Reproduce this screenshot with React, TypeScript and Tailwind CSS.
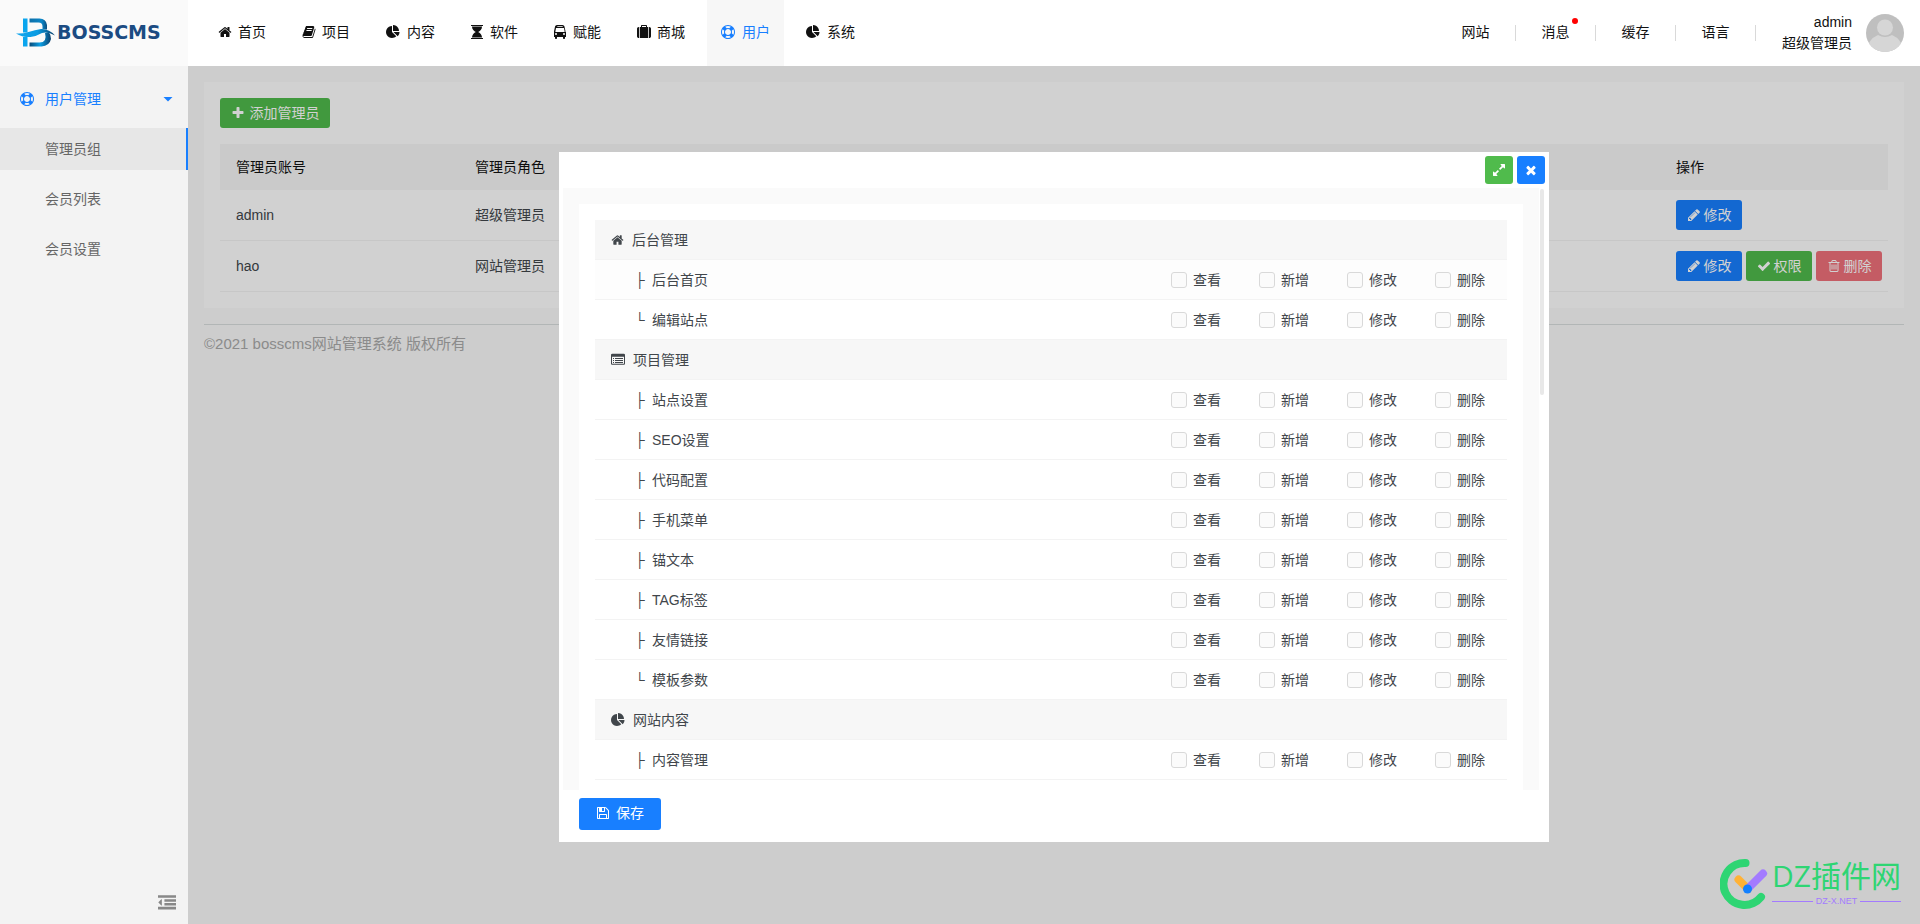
import type { ReactNode } from 'react'

const icons = {
  home: 'M1472 992v480q0 26-19 45t-45 19h-384v-384h-256v384h-384q-26 0-45-19t-19-45v-480q0-1 .5-3t.5-3l575-474 575 474q1 2 1 6zm223-69l-62 74q-8 9-21 11h-3q-13 0-21-7l-692-577-692 577q-12 8-24 7-13-2-21-11l-62-74q-8-10-7-23.5t11-21.5l719-599q32-26 76-26t76 26l244 204v-195q0-14 9-23t23-9h192q14 0 23 9t9 23v408l219 182q10 8 11 21.5t-7 23.5z',
  book: 'M1703 478q40 57 18 129l-275 906q-19 64-76.5 107.5t-122.5 43.5h-923q-77 0-148.5-53.5t-99.5-131.5q-24-67-2-127 0-4 3-27t4-37q1-8-3-21.5t-3-19.5q2-11 8-21t16.5-23.5 16.5-23.5q23-38 45-91.5t30-91.5q3-10 .5-30t-.5-28q3-11 17-28t17-23q21-36 42-92t25-90q1-9-2.5-32t.5-28q4-13 22-30.5t22-22.5q19-26 42.5-84.5t27.5-96.5q1-8-3-25.5t-2-26.5q2-8 9-18t18-23 17-21q8-12 16.5-30.5t15-35 16-36 19.5-32 26.5-23.5 36-11.5 47.5 5.5l-1 3q38-9 51-9h761q74 0 114 56t18 130l-274 906q-36 119-71.5 153.5t-128.5 34.5h-869q-27 0-38 15-11 16-1 43 24 70 144 70h923q29 0 56-15.5t35-41.5l300-987q7-22 5-57 38 15 59 43zm-1064 2q-4 13 2 22.5t20 9.5h608q13 0 25.5-9.5t16.5-22.5l21-64q4-13-2-22.5t-20-9.5h-608q-13 0-25.5 9.5t-16.5 22.5zm-83 256q-4 13 2 22.5t20 9.5h608q13 0 25.5-9.5t16.5-22.5l21-64q4-13-2-22.5t-20-9.5h-608q-13 0-25.5 9.5t-16.5 22.5z',
  pie: 'M768 890l546 546q-106 108-247.5 168t-298.5 60q-209 0-385.5-103t-279.5-279.5-103-385.5 103-385.5 279.5-279.5 385.5-103v762zm187 6h773q0 157-60 298.5t-168 247.5zm709-128h-768v-768q209 0 385.5 103t279.5 279.5 103 385.5z',
  hourglass: 'M128 0h1536v128h-1536zM256 192h1280q0 270-160 460t-330 244q170 54 330 244t160 460h-1280q0-270 160-460t330-244q-170-54-330-244t-160-460zM128 1664h1536v128h-1536z',
  bus: 'M512 1152a128 128 0 1 0-256 0a128 128 0 1 0 256 0zM1536 1152a128 128 0 1 0-256 0a128 128 0 1 0 256 0zM1489 817l-72-384q-5-23-22.500-37.500t-40.500-14.500h-918q-23 0-40.500 14.500t-22.500 37.500l-72 384q-5 30 14 53t49 23h1062q30 0 49-23t14-53zM1248 208q0-20-14-34t-34-14h-608q-20 0-34 14t-14 34 14 34 34 14h608q20 0 34-14t14-34zM1664 894v642h-128v128q0 53-37.500 90.500t-90.500 37.500-90.500-37.500-37.500-90.500v-128h-768v128q0 53-37.500 90.500t-90.500 37.500-90.500-37.500-37.500-90.500v-128h-128v-642q0-93 20-181l108-499q9-79 101-141t224.500-97 282.500-35 282.500 35 224.500 97 103 141l106 499q20 88 20 181z',
  suitcase: 'M640 256h512v-128h-512v128zm-352 0v1408h-64q-92 0-158-66t-66-158v-960q0-92 66-158t158-66h64zm1120 0v1408h-1024v-1408h128v-160q0-40 28-68t68-28h576q40 0 68 28t28 68v160h128zm384 224v960q0 92-66 158t-158 66h-64v-1408h64q92 0 158 66t66 158z',
  ring: 'M896 0q182 0 348 71t286 191 191 286 71 348-71 348-191 286-286 191-348 71-348-71-286-191-191-286-71-348 71-348 191-286 286-191 348-71zm0 128q-190 0-361 90l194 194q82-28 167-28t167 28l194-194q-171-90-361-90zm-678 1129l194-194q-28-82-28-167t28-167l-194-194q-90 171-90 361t90 361zm678 407q190 0 361-90l-194-194q-82 28-167 28t-167-28l-194 194q171 90 361 90zm0-384q159 0 271.5-112.5t112.5-271.5-112.5-271.5-271.5-112.5-271.5 112.5-112.5 271.5 112.5 271.5 271.5 112.5zm484-217l194 194q90-171 90-361t-90-361l-194 194q28 82 28 167t-28 167z',
  pencil: 'M491 1536l91-91-235-235-91 91v107h128v128h107zm523-928q0-22-22-22-10 0-17 7l-542 542q-7 7-7 17 0 22 22 22 10 0 17-7l542-542q7-7 7-17zm-54-192l416 416-832 832h-416v-416zm683 96q0 53-37 90l-166 166-416-416 166-165q36-38 90-38 53 0 91 38l235 234q37 39 37 91z',
  check: 'M1671 566q0 40-28 68l-724 724-136 136q-28 28-68 28t-68-28l-136-136-362-362q-28-28-28-68t28-68l136-136q28-28 68-28t68 28l294 295 656-657q28-28 68-28t68 28l136 136q28 28 28 68z',
  times: 'M1490 1322q0 40-28 68l-136 136q-28 28-68 28t-68-28l-294-294-294 294q-28 28-68 28t-68-28l-136-136q-28-28-28-68t28-68l294-294-294-294q-28-28-28-68t28-68l136-136q28-28 68-28t68 28l294 294 294-294q28-28 68-28t68 28l136 136q28 28 28 68t-28 68l-294 294 294 294q28 28 28 68z',
  plus: 'M1600 736v192q0 40-28 68t-68 28h-416v416q0 40-28 68t-68 28h-192q-40 0-68-28t-28-68v-416h-416q-40 0-68-28t-28-68v-192q0-40 28-68t68-28h416v-416q0-40 28-68t68-28h192q40 0 68 28t28 68v416h416q40 0 68 28t28 68z',
  trash: 'M704 736v576q0 14-9 23t-23 9h-64q-14 0-23-9t-9-23v-576q0-14 9-23t23-9h64q14 0 23 9t9 23zm256 0v576q0 14-9 23t-23 9h-64q-14 0-23-9t-9-23v-576q0-14 9-23t23-9h64q14 0 23 9t9 23zm256 0v576q0 14-9 23t-23 9h-64q-14 0-23-9t-9-23v-576q0-14 9-23t23-9h64q14 0 23 9t9 23zm128 724v-948h-896v948q0 22 7 40.5t14.5 27 10.500 8.500h832q3 0 10.500-8.500t14.500-27 7-40.500zm-672-1076h448l-48-117q-7-9-17-11h-317q-10 2-17 11zm928 32v64q0 14-9 23t-23 9h-96v948q0 83-47 143.500t-113 60.500h-832q-66 0-113-58.500t-47-141.500v-952h-96q-14 0-23-9t-9-23v-64q0-14 9-23t23-9h309l70-167q15-37 54-63t79-26h320q40 0 79 26t54 63l70 167h309q14 0 23 9t9 23z',
  save: 'M512 1536h768v-384h-768v384zm896 0h128v-896q0-14-10-38.5t-20-34.5l-281-281q-10-10-34-20t-39-10v416q0 40-28 68t-68 28h-576q-40 0-68-28t-28-68v-416h-128v1280h128v-416q0-40 28-68t68-28h832q40 0 68 28t28 68v416zm-384-928v-320q0-13-9.5-22.5t-22.5-9.5h-192q-13 0-22.5 9.5t-9.5 22.5v320q0 13 9.5 22.5t22.5 9.5h192q13 0 22.5-9.5t9.5-22.5zm640 32v928q0 40-28 68t-68 28h-1344q-40 0-68-28t-28-68v-1344q0-40 28-68t68-28h928q40 0 88 20t76 48l280 280q28 28 48 76t20 88z',
  list: 'M256 640h128v128h-128zM256 896h128v128h-128zM256 1152h128v128h-128zM512 640h1024v128h-1024zM512 896h1024v128h-1024zM512 1152h1024v128h-1024zm1152 192v-832q0-13-9.5-22.5t-22.5-9.5h-1472q-13 0-22.5 9.5t-9.5 22.5v832q0 13 9.5 22.5t22.5 9.5h1472q13 0 22.5-9.5t9.5-22.5zm128-1088v1088q0 66-47 113t-113 47h-1472q-66 0-113-47t-47-113v-1088q0-66 47-113t113-47h1472q66 0 113 47t47 113z',
  expand: 'M883 1056q0 13-10 23l-332 332 144 144q19 19 19 45t-19 45-45 19h-448q-26 0-45-19t-19-45v-448q0-26 19-45t45-19 45 19l144 144 332-332q10-10 23-10t23 10l114 114q10 10 10 23zm781-864v448q0 26-19 45t-45 19-45-19l-144-144-332 332q-10 10-23 10t-23-10l-114-114q-10-10-10-23t10-23l332-332-144-144q-19-19-19-45t19-45 45-19h448q26 0 45 19t19 45z',
  outdent: 'M384 544v576q0 32-32 32-14 0-23-9l-288-288q-9-9-9-23t9-23l288-288q9-9 23-9 32 0 32 32zM0 128h1792v256h-1792zM640 512h1152v256h-1152zM640 896h1152v256h-1152zM0 1280h1792v256h-1792z',
  caret: 'M320 640h1152l-576 576z',
}

type IconName = keyof typeof icons

function Icon({ name, className = 'size-[14px]' }: { name: IconName; className?: string }) {
  return (
    <svg viewBox="0 0 1792 1792" fill="currentColor" fillRule="evenodd" className={`shrink-0 ${className}`} aria-hidden="true">
      <path d={icons[name]} />
    </svg>
  )
}

const navItems: { label: string; icon: IconName; box: string; active?: boolean }[] = [
  { label: '首页', icon: 'home', box: 'w-[13px]' },
  { label: '项目', icon: 'book', box: 'w-[13px]' },
  { label: '内容', icon: 'pie', box: 'w-[14px]' },
  { label: '软件', icon: 'hourglass', box: 'w-[12px]' },
  { label: '赋能', icon: 'bus', box: 'w-[12px]' },
  { label: '商城', icon: 'suitcase', box: 'w-[13px]' },
  { label: '用户', icon: 'ring', box: 'w-[14px]', active: true },
  { label: '系统', icon: 'pie', box: 'w-[14px]' },
]

const tools = ['网站', '消息', '缓存', '语言']
const sideItems = ['管理员组', '会员列表', '会员设置']
const actions = ['查看', '新增', '修改', '删除']

const groups: { title: string; icon: IconName; rows: string[]; more?: boolean }[] = [
  { title: '后台管理', icon: 'home', rows: ['后台首页', '编辑站点'] },
  {
    title: '项目管理',
    icon: 'list',
    rows: ['站点设置', 'SEO设置', '代码配置', '手机菜单', '锚文本', 'TAG标签', '友情链接', '模板参数'],
  },
  { title: '网站内容', icon: 'pie', rows: ['内容管理'], more: true },
]

function Logo() {
  return (
    <a href="#" className="flex h-[66px] items-center gap-0.5 bg-[#fafafa] pb-0.5 pl-4">
      <svg viewBox="0 0 39 29" className="h-[29px] w-[39px] shrink-0" aria-hidden="true">
        <defs>
          <linearGradient id="top" x1="0" x2="1">
            <stop offset="0" stopColor="#0e6fa8" />
            <stop offset=".7" stopColor="#0a86c8" />
            <stop offset="1" stopColor="#0b4f80" />
          </linearGradient>
          <linearGradient id="bottom" x1="0" x2="1">
            <stop offset="0" stopColor="#0a4a78" />
            <stop offset=".5" stopColor="#0aa0e6" />
            <stop offset="1" stopColor="#0c3f6c" />
          </linearGradient>
          <linearGradient id="wave" x1="0" x2="1">
            <stop offset="0" stopColor="#12a6ee" />
            <stop offset=".55" stopColor="#0a9be2" />
            <stop offset="1" stopColor="#0b3f6b" />
          </linearGradient>
        </defs>
        <path d="M7 0.500h4.500v14h-4.500zM7 19l4.500-1v10.500h-4.500z" fill="#0aa5ee" />
        <path d="M13.500 0.500h10q6.500 0 7.500 6.500v4.500l-4.500-.5v-2.500q0-4-4-4h-9z" fill="url(#top)" />
        <path d="M13.500 28.500h12q8-.5 9.500-7.500 0-4-2-6.500l-4 .5q2.500 9.500-5.500 9.500h-10z" fill="url(#bottom)" />
        <path d="M0 15.500q6 .5 12.500-1.500t12.500-3q8-.5 14 6.500-7-4-13-2.500-5 3-11.500 4-8 .5-14.500-3.500z" fill="url(#wave)" />
      </svg>
      <span className="font-['DejaVu_Sans'] text-[19px] leading-none font-bold text-[#1b4b82]">BOSSCMS</span>
    </a>
  )
}

function Header() {
  return (
    <header className="flex h-[66px] bg-white text-[#111]">
      <div className="w-[188px] shrink-0">
        <Logo />
      </div>
      <nav className="flex gap-2 pl-4">
        {navItems.map((item) => (
          <a
            key={item.label}
            href="#"
            className={`flex items-center gap-[7px] px-[14px] pb-0.5 ${item.active ? 'bg-[#f7f7f7] text-[#187fff]' : ''}`}
          >
            <span className={`flex justify-center ${item.box}`}>
              <Icon name={item.icon} />
            </span>
            {item.label}
          </a>
        ))}
      </nav>
      <div className="ml-auto flex items-center pr-4">
        {tools.map((tool) => (
          <a key={tool} href="#" className="flex h-4 w-20 items-center justify-center border-r border-[#d9d9d9] pb-0.5">
            <span className="relative">
              {tool}
              {tool === '消息' && <i className="absolute -top-1 -right-2 size-[6px] rounded-full bg-[#f00]" />}
            </span>
          </a>
        ))}
        <div className="w-24 text-right leading-[21px]">
          <p>admin</p>
          <p>超级管理员</p>
        </div>
        <svg viewBox="0 0 38 38" className="ml-[14px] size-[38px]" aria-hidden="true">
          <defs>
            <clipPath id="avatar">
              <circle cx="19" cy="19" r="19" />
            </clipPath>
          </defs>
          <g clipPath="url(#avatar)">
            <path d="M0 0h38v38H0z" fill="#bfbfbf" />
            <path d="M0 38q2-13 12-17 7 4 14 0 10 4 12 17z" fill="#d6d6d6" />
            <circle cx="19" cy="13.500" r="8" fill="#d6d6d6" />
          </g>
        </svg>
      </div>
    </header>
  )
}

function Sidebar() {
  return (
    <aside className="flex w-[188px] shrink-0 flex-col bg-[#f3f3f3] text-[#666]">
      <a href="#" className="mb-1 flex h-[58px] items-center pt-2 pr-[13px] pl-5 text-[#187fff]">
        <Icon name="ring" />
        <span className="ml-[11px]">用户管理</span>
        <Icon name="caret" className="ml-auto size-[14px]" />
      </a>
      <ul className="flex flex-col gap-2">
        {sideItems.map((item, i) => (
          <li key={item}>
            <a
              href="#"
              className={`flex h-[42px] items-center pl-[45px] ${i === 0 ? 'border-r-2 border-[#187fff] bg-[#e7e7e7]' : ''}`}
            >
              {item}
            </a>
          </li>
        ))}
      </ul>
      <button type="button" aria-label="收起" className="mt-auto mr-3 mb-3 self-end text-[#888]">
        <Icon name="outdent" className="size-[18px]" />
      </button>
    </aside>
  )
}

function ActionButton({ icon, color, children }: { icon: IconName; color: string; children: ReactNode }) {
  return (
    <button type="button" className={`flex h-[30px] w-[66px] items-center justify-center gap-[3px] rounded-[3px] text-white ${color}`}>
      <Icon name={icon} />
      {children}
    </button>
  )
}

function AdminPanel() {
  return (
    <div className="p-4">
      <section className="bg-white p-4">
        <button type="button" className="flex h-[30px] w-[110px] items-center justify-center gap-[5px] rounded-[3px] bg-[#50bb4c] text-white">
          <Icon name="plus" />
          添加管理员
        </button>
        <table className="mt-4 w-full border-separate border-spacing-0 text-left text-[#41464b] [&_td]:border-b [&_td]:border-[#f3f3f3]">
          <thead>
            <tr className="h-[46px] bg-[#f7f7f7] text-[#111]">
              <th className="w-[239px] pl-4 font-normal">管理员账号</th>
              <th className="pl-4 font-normal">管理员角色</th>
              <th className="w-[228px] pl-4 font-normal">操作</th>
            </tr>
          </thead>
          <tbody>
            <tr className="h-[51px]">
              <td className="pl-4">admin</td>
              <td className="pl-4">超级管理员</td>
              <td className="pl-4">
                <ActionButton icon="pencil" color="bg-[#187fff]">修改</ActionButton>
              </td>
            </tr>
            <tr className="h-[51px]">
              <td className="pl-4">hao</td>
              <td className="pl-4">网站管理员</td>
              <td className="pl-4">
                <div className="flex gap-1">
                  <ActionButton icon="pencil" color="bg-[#187fff]">修改</ActionButton>
                  <ActionButton icon="check" color="bg-[#50bb4c]">权限</ActionButton>
                  <ActionButton icon="trash" color="bg-[#f0717b]">删除</ActionButton>
                </div>
              </td>
            </tr>
          </tbody>
        </table>
      </section>
      <footer className="mt-4 border-t border-[#d9dfdf] pt-2 text-[15px] leading-[22px] text-[#aaa]">
        ©2021 bosscms网站管理系统 版权所有
      </footer>
    </div>
  )
}

function PermissionModal() {
  return (
    <div role="dialog" aria-label="权限" className="flex h-[690px] w-[990px] flex-col bg-white px-1 text-[#41464b]">
      <div className="flex h-9 shrink-0 items-center justify-end gap-1 text-white">
        <button type="button" aria-label="放大" className="flex size-7 items-center justify-center rounded-[3px] bg-[#50bb4c]">
          <Icon name="expand" />
        </button>
        <button type="button" aria-label="关闭" className="flex size-7 items-center justify-center rounded-[3px] bg-[#187fff]">
          <Icon name="times" />
        </button>
      </div>
      <div className="flex min-h-0 flex-1 gap-px">
        <div className="flex-1 overflow-hidden bg-[#fafafa] p-4">
          <div className="bg-white p-4">
            {groups.map((group) => (
              <section key={group.title}>
                <h2 className="flex h-10 items-center gap-2 border-b border-[#f3f3f3] bg-[#f7f7f7] pl-4">
                  <Icon name={group.icon} className={group.icon === 'home' ? 'h-[14px] w-[13px]' : 'size-[14px]'} />
                  {group.title}
                </h2>
                {group.rows.map((row, i) => (
                  <div
                    key={row}
                    className={`flex h-10 items-center border-b border-[#f3f3f3] pr-[22px] pl-10 ${row === '后台首页' ? 'bg-[#fdfdfd]' : ''}`}
                  >
                    <span className="w-[17px]">{i === group.rows.length - 1 && !group.more ? '└' : '├'}</span>
                    {row}
                    <div className="ml-auto flex gap-[38px]">
                      {actions.map((action) => (
                        <label key={action} className="flex items-center gap-[6px]">
                          <input
                            type="checkbox"
                            className="size-4 appearance-none rounded-[3px] border border-[#d9d9d9] bg-[#fbfbfb] checked:border-[#187fff] checked:bg-[#187fff]"
                          />
                          {action}
                        </label>
                      ))}
                    </div>
                  </div>
                ))}
              </section>
            ))}
            <div className="h-10" />
          </div>
        </div>
        <div className="mt-px mr-px h-[206px] w-1 rounded-full bg-[#e8e8e8]" />
      </div>
      <div className="h-[52px] shrink-0 pt-2 pl-4">
        <button type="button" className="flex h-8 w-[82px] items-center justify-center gap-[6px] rounded-[3px] bg-[#187fff] pb-0.5 text-white">
          <Icon name="save" />
          保存
        </button>
      </div>
    </div>
  )
}

function Watermark() {
  return (
    <div className="absolute right-[19px] bottom-[14px] flex items-center gap-1">
      <svg viewBox="0 0 48 52" className="h-[52px] w-12" aria-hidden="true">
        <g fill="none" strokeLinecap="round">
          <path d="M25.500 5A21 21 0 1 0 41 39" stroke="#2ed573" strokeWidth="8" />
          <path d="M18.500 21.500L28 31" stroke="#ffb236" strokeWidth="8" />
          <path d="M43 15.500L28 30.500" stroke="#a37bff" strokeWidth="8" />
        </g>
        <circle cx="27.500" cy="31" r="4.500" fill="#1380ff" />
      </svg>
      <div>
        <p className="font-['Open_Sans','Noto_Sans_CJK_SC',sans-serif] text-[30px] leading-[30px] text-[#2ed573]">DZ插件网</p>
        <div className="mt-1 flex items-center gap-[3px] text-[9px] leading-3 text-[#a37bff]">
          <i className="h-px flex-1 bg-[#a37bff]" />
          DZ-X.NET
          <i className="h-px flex-1 bg-[#a37bff]" />
        </div>
      </div>
    </div>
  )
}

export default function App() {
  return (
    <div className="flex min-h-screen flex-col font-['Liberation_Sans','Noto_Sans_CJK_SC',sans-serif] text-[14px] leading-5">
      <Header />
      <div className="flex flex-1">
        <Sidebar />
        <main className="relative flex-1 bg-[#fafafa]">
          <AdminPanel />
          <div className="absolute inset-0 flex items-center justify-center bg-black/18 pt-1">
            <PermissionModal />
          </div>
          <Watermark />
        </main>
      </div>
    </div>
  )
}
